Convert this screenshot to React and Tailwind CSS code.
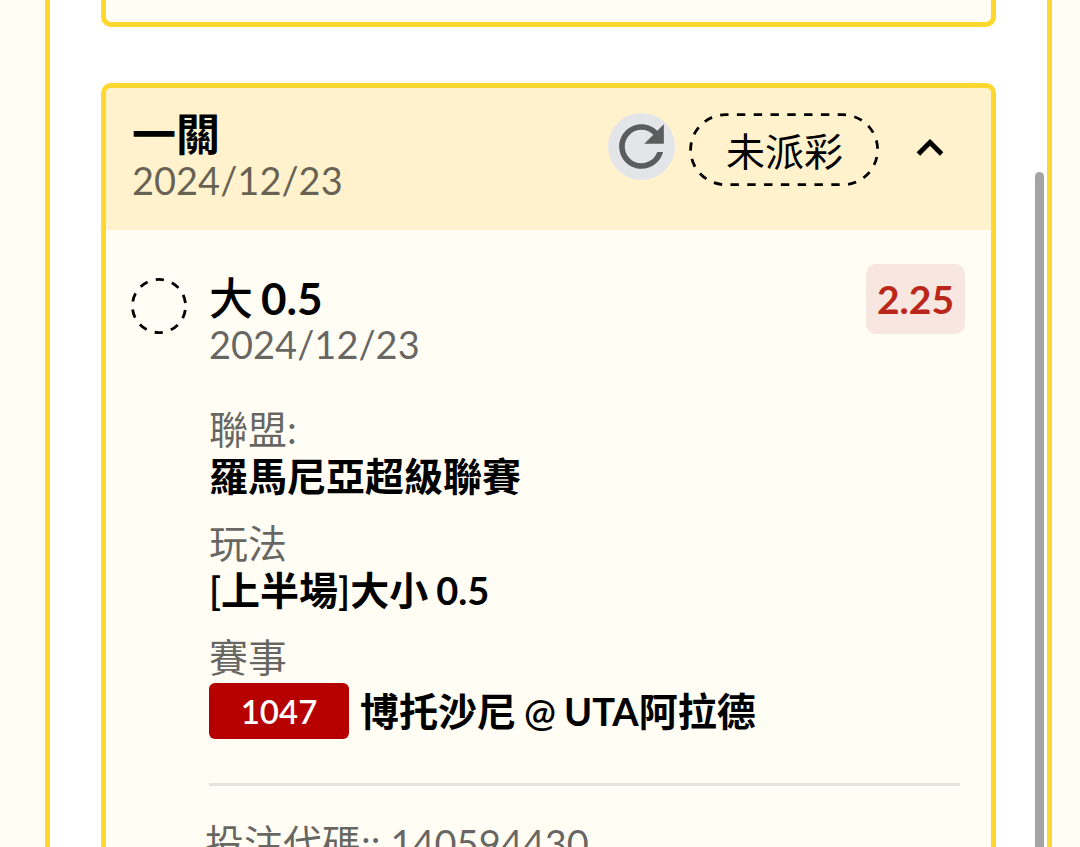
import React from "react";

function RefreshIcon() {
  return (
    <svg viewBox="0 0 24 24" className="size-full fill-[#5b5c5e]" aria-hidden="true">
      <path d="M17.65 6.35C16.2 4.9 14.21 4 12 4c-4.42 0-7.99 3.58-7.99 8s3.57 8 7.99 8c3.73 0 6.84-2.55 7.73-6h-2.08c-.82 2.33-3.04 4-5.65 4-3.31 0-6-2.69-6-6s2.69-6 6-6c1.66 0 3.14.69 4.22 1.78L13 11h7V4z" />
    </svg>
  );
}

function ChevronUpIcon() {
  return (
    <svg viewBox="0 0 24 24" className="size-[52px] fill-black" aria-hidden="true">
      <path d="M7.41 15.41 12 10.83l4.59 4.58L18 14l-6-6-6 6z" stroke="black" strokeWidth="0.3" />
    </svg>
  );
}

function StatusPill({ children }) {
  return (
    <span className="relative flex h-[76px] w-[191px] items-center justify-center text-[39px] leading-[48px]">
      <svg viewBox="0 0 191 76" className="absolute inset-0 size-full" aria-hidden="true">
        <rect
          x="1.6"
          y="1.7"
          width="187"
          height="70"
          rx="35"
          fill="none"
          stroke="black"
          strokeWidth="2.8"
          strokeDasharray="8.4 8.4"
          strokeDashoffset="5.5"
        />
      </svg>
      {children}
    </span>
  );
}

function Field({ label, children }) {
  return (
    <div>
      <dt className="text-black/60">{label}</dt>
      <dd className="font-bold">{children}</dd>
    </div>
  );
}

export default function App() {
  return (
    <div className="h-screen overflow-hidden bg-[#fffdf4] pr-7 pl-[45px] font-['Lato','Noto_Sans_CJK_TC',sans-serif] text-[39px] leading-[47px] text-black">
      <main className="relative flex h-full flex-col gap-14 overflow-hidden border-x-[5px] border-[#fed82f] bg-white px-[51px]">
        <section className="h-[27px] shrink-0 rounded-b-[10px] border-[5px] border-t-0 border-[#fed82f] bg-[#fffdf4]" />

        <section className="shrink-0 overflow-hidden rounded-t-[10px] border-[5px] border-b-0 border-[#fed82f] bg-[#fffdf4]">
          <header className="flex h-[142px] items-start justify-between bg-[#fff2cd] pr-[35px] pl-[26px]">
            <div className="pt-[22px]">
              <h2 className="text-[44px] leading-[48px] font-bold">一關</h2>
              <p className="text-[38px] leading-[44px] text-black/60">2024/12/23</p>
            </div>
            <div className="flex items-start pt-[25px]">
              <button type="button" aria-label="重新整理" className="mr-[14px] size-[67px] rounded-full bg-[#e4e5e8]">
                <RefreshIcon />
              </button>
              <StatusPill>未派彩</StatusPill>
              <button type="button" aria-label="收合" className="ml-6 flex h-[70px] items-center">
                <ChevronUpIcon />
              </button>
            </div>
          </header>

          <div className="flex pt-[34px] pr-[26px] pl-[25px]">
            <svg viewBox="0 0 56 56" className="mt-[14px] size-14 shrink-0" aria-hidden="true">
              <circle
                cx="28"
                cy="28"
                r="26.6"
                fill="none"
                stroke="black"
                strokeWidth="2.8"
                strokeDasharray="8.36 8.35"
                strokeDashoffset="-4.2"
              />
            </svg>
            <div className="ml-[22px] min-w-0 flex-1">
              <div className="flex items-start justify-between">
                <div className="pt-[10px]">
                  <h3 className="flex gap-2 text-[44px] leading-[48px] font-medium">
                    大 <span className="font-bold">0.5</span>
                  </h3>
                  <p className="text-[38px] leading-[44px] text-black/60">2024/12/23</p>
                </div>
                <span className="flex h-[70px] w-[99px] items-center justify-center rounded-[10px] bg-[#f8e6e0] font-bold text-[#bb261a]">
                  2.25
                </span>
              </div>

              <dl className="flex flex-col gap-5 pt-10">
                <Field label="聯盟:">羅馬尼亞超級聯賽</Field>
                <Field label="玩法">
                  <span className="flex gap-2">
                    <span className="font-semibold">[上半場]大小</span>
                    <span className="text-[38px]">0.5</span>
                  </span>
                </Field>
                <Field label="賽事">
                  <span className="flex items-center gap-2 pt-[2px]">
                    <span className="mr-[3px] flex h-14 w-[140px] items-center justify-center rounded-md bg-[#b60000] text-[33px] font-semibold text-white">
                      1047
                    </span>
                    <span>博托沙尼</span>
                    <span className="text-[38px] font-semibold">@</span>
                    <span>
                      <span className="text-[38px]">UTA</span>阿拉德
                    </span>
                  </span>
                </Field>
              </dl>

              <hr className="mt-11 mr-[5px] border-t-[3px] border-[#e6e3dc]" />
              <p className="mt-[34px] -ml-1 text-black/60">
                投注代碼:: <span className="text-[38px]">140594430</span>
              </p>
            </div>
          </div>
        </section>

        <div className="absolute top-[172px] right-[3px] h-full w-[9px] rounded-full bg-[#a4a4a4]" />
      </main>
    </div>
  );
}
